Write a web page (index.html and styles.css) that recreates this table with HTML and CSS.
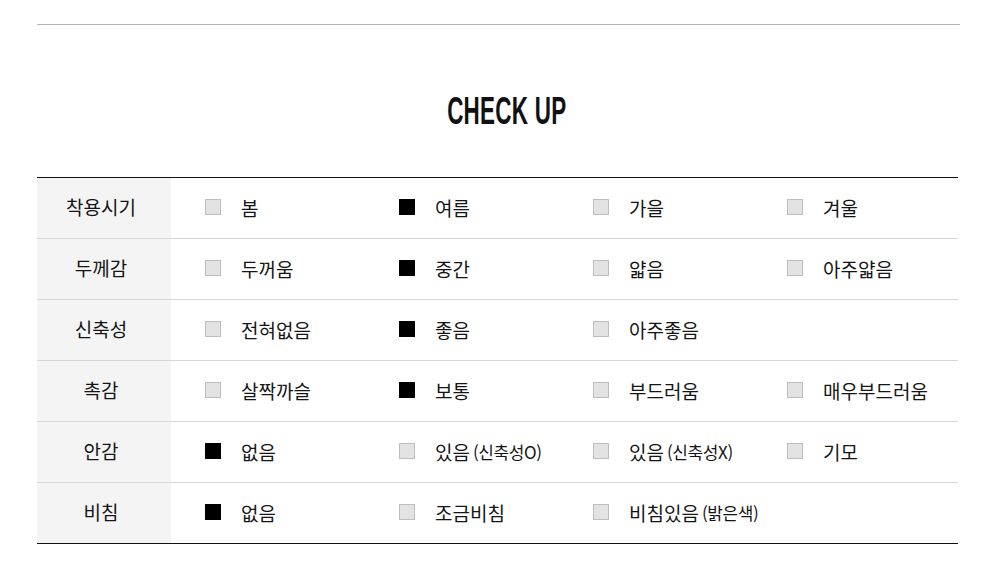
FILE: index.html
```html
<!DOCTYPE html>
<html lang="ko">
<head>
<meta charset="utf-8">
<link rel="stylesheet" href="styles.css">
</head>
<body>
<div class="page">
  <div class="topline"></div>
  <h2 class="title"><span class="title-text">CHECK UP</span></h2>
  <table class="check">
    <tr>
      <th>착용시기</th>
      <td>
        <span class="opt"><i class="box"></i>봄</span><span class="opt"><i class="box on"></i>여름</span><span class="opt"><i class="box"></i>가을</span><span class="opt"><i class="box"></i>겨울</span>
      </td>
    </tr>
    <tr>
      <th>두께감</th>
      <td>
        <span class="opt"><i class="box"></i>두꺼움</span><span class="opt"><i class="box on"></i>중간</span><span class="opt"><i class="box"></i>얇음</span><span class="opt"><i class="box"></i>아주얇음</span>
      </td>
    </tr>
    <tr>
      <th>신축성</th>
      <td>
        <span class="opt"><i class="box"></i>전혀없음</span><span class="opt"><i class="box on"></i>좋음</span><span class="opt"><i class="box"></i>아주좋음</span>
      </td>
    </tr>
    <tr>
      <th>촉감</th>
      <td>
        <span class="opt"><i class="box"></i>살짝까슬</span><span class="opt"><i class="box on"></i>보통</span><span class="opt"><i class="box"></i>부드러움</span><span class="opt"><i class="box"></i>매우부드러움</span>
      </td>
    </tr>
    <tr>
      <th>안감</th>
      <td>
        <span class="opt"><i class="box on"></i>없음</span><span class="opt"><i class="box"></i>있음<small>(신축성O)</small></span><span class="opt"><i class="box"></i>있음<small>(신축성X)</small></span><span class="opt"><i class="box"></i>기모</span>
      </td>
    </tr>
    <tr>
      <th>비침</th>
      <td>
        <span class="opt"><i class="box on"></i>없음</span><span class="opt"><i class="box"></i>조금비침</span><span class="opt"><i class="box"></i>비침있음<small>(밝은색)</small></span>
      </td>
    </tr>
  </table>
</div>
</body>
</html>
```
FILE: styles.css
```css
html, body {
  margin: 0;
  padding: 0;
  background: #fff;
}
body {
  font-family: "Noto Sans CJK KR", "Noto Sans", sans-serif;
  color: #151515;
}
.page {
  width: 923px;
  margin: 0 0 0 37px;
  padding-top: 24px;
}
.topline {
  height: 1px;
  background: #b5b5b5;
}
.title {
  margin: 66px 0 0 0;
  height: 86px;
  text-align: center;
  font-family: "Liberation Sans", Arial, sans-serif;
  font-weight: 700;
  font-size: 39px;
  line-height: 40px;
  color: #111;
  padding-left: 16px;
}
.title-text {
  display: inline-block;
  transform: scaleX(0.575);
  transform-origin: center;
  letter-spacing: 0.5px;
}
.check {
  width: 921px;
  border-collapse: collapse;
  border-top: 1px solid #111;
  border-bottom: 1px solid #111;
}
.check tr + tr th,
.check tr + tr td {
  border-top: 1px solid #d6d6d6;
}
.check th {
  width: 134px;
  height: 60px;
  padding: 0 6px 3px 0;
  box-sizing: border-box;
  background: #f4f4f4;
  font-weight: 400;
  font-size: 19px;
  text-align: center;
  color: #151515;
}
.check td {
  padding: 0;
  height: 60px;
  font-size: 19px;
  white-space: nowrap;
}
.opt {
  display: inline-flex;
  align-items: center;
  width: 160px;
  padding-left: 34px;
  padding-bottom: 3px;
  vertical-align: middle;
}
.box {
  display: inline-block;
  width: 16px;
  height: 16px;
  box-sizing: border-box;
  background: #e3e3e3;
  border: 1px solid #bdbdbd;
  margin-right: 20px;
  flex: none;
}
.box.on {
  background: #000;
  border-color: #000;
}
.opt small {
  font-size: 17px;
  margin-left: 3px;
  letter-spacing: -0.4px;
}
```
